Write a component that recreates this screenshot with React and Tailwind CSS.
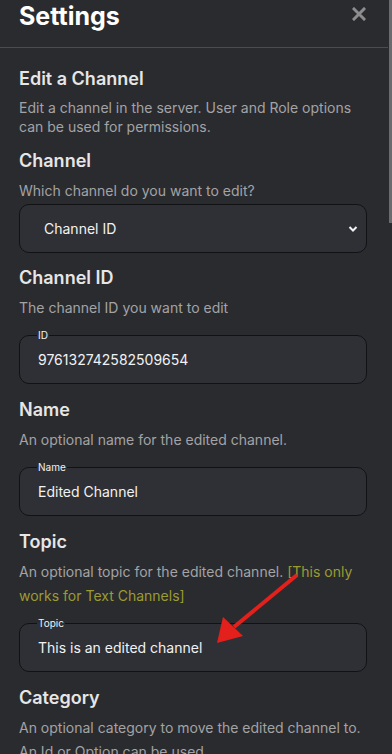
import React from "react";

const font = { fontFamily: "Inter, 'Noto Sans', sans-serif" };

function Heading({ children, className = "" }) {
  return (
    <div className={"text-[18px] leading-[24px] font-semibold text-[#e6e6e6] " + className}>
      {children}
    </div>
  );
}

function Desc({ children, className = "" }) {
  return (
    <div className={"text-[14px] leading-[24px] text-[#a3a3a5] " + className}>{children}</div>
  );
}

function Field({ label, value }) {
  return (
    <fieldset className="mt-[9px] border border-[#111214] rounded-[10px] bg-[#2e3035] px-[18px] h-[55px]">
      <legend className="ml-[-1px] px-[1px] text-[10px] leading-[12px] text-[#f2f2f2]">{label}</legend>
      <div className="pt-[9px] text-[14px] leading-[20px] text-[#f2f2f2]">{value}</div>
    </fieldset>
  );
}

export default function App() {
  return (
    <div className="relative w-[392px] h-[754px] overflow-hidden bg-[#2a2b2f]" style={font}>
      <div className="absolute right-0 top-0 w-[3px] h-[223px] bg-[#6a6b6e]" />
      <div className="mr-[4px] flex items-start justify-between h-[48px] border-b border-[#4b4c51] pl-[19px] pr-[22px]">
        <div className="mt-[-1px] text-[25px] leading-[34px] font-bold text-white">Settings</div>
        <svg width="14" height="14" viewBox="0 0 14 14" className="mt-[7px]">
          <path d="M2 2L12 12M12 2L2 12" stroke="#8d8d8f" strokeWidth="3" strokeLinecap="square" />
        </svg>
      </div>
      <div className="pl-[19px] pr-[25px]">
        <Heading className="mt-[19px]">Edit a Channel</Heading>
        <div className="mt-[7px] text-[14px] leading-[19px] text-[#a3a3a5]">
          Edit a channel in the server. User and Role options can be used for permissions.
        </div>

        <Heading className="mt-[13px]">Channel</Heading>
        <Desc className="mt-[6px]">Which channel do you want to edit?</Desc>
        <div className="mt-[1px] h-[49px] border border-[#111214] rounded-[10px] bg-[#2e3035] flex items-center justify-between pl-[24px] pr-[8px]">
          <span className="text-[14px] text-[#f2f2f2]">Channel ID</span>
          <svg width="10" height="8" viewBox="0 0 10 8">
            <path d="M1.5 2L5 5.5L8.5 2" stroke="#f2f2f2" strokeWidth="2" fill="none" />
          </svg>
        </div>

        <Heading className="mt-[13px]">Channel ID</Heading>
        <Desc className="mt-[6px]">The channel ID you want to edit</Desc>
        <Field label="ID" value="976132742582509654" />

        <Heading className="mt-[14px]">Name</Heading>
        <Desc className="mt-[6px]">An optional name for the edited channel.</Desc>
        <Field label="Name" value="Edited Channel" />

        <Heading className="mt-[14px]">Topic</Heading>
        <Desc className="mt-[6px]">
          An optional topic for the edited channel.{" "}
          <span className="text-[#9c9b2f]">[This only works for Text Channels]</span>
        </Desc>
        <Field label="Topic" value="This is an edited channel" />

        <Heading className="mt-[14px]">Category</Heading>
        <Desc className="mt-[6px]">
          An optional category to move the edited channel to. An Id or Option can be used.
        </Desc>
      </div>

      <svg className="absolute left-0 top-0 pointer-events-none" width="392" height="754">
        <line x1="297" y1="575" x2="234" y2="627" stroke="#e3201b" strokeWidth="4" />
        <polygon points="217,643 223,617 243,636" fill="#e3201b" />
      </svg>
    </div>
  );
}
